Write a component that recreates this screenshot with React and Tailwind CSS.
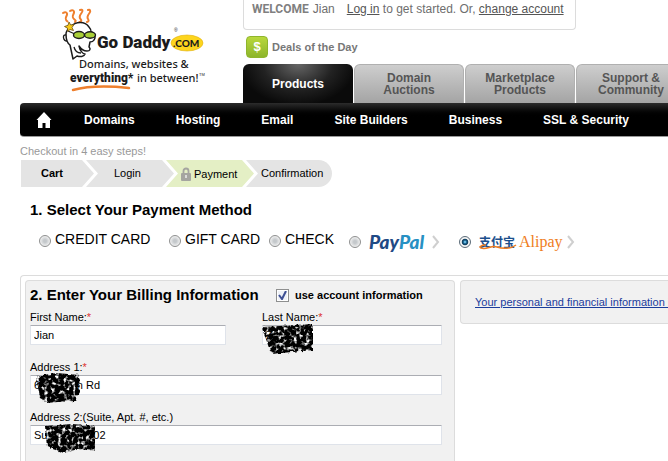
const tabs = ["Domain Auctions", "Marketplace Products", "Support & Community"];
const menu = ["Domains", "Hosting", "Email", "Site Builders", "Business", "SSL & Security"];

const inputClass =
  "block w-full h-5 px-[3px] text-[11px] leading-4 text-black bg-white border border-[#dfe3ea] border-t-[#abadb3] rounded-[1px]";

function Logo() {
  return (
    <svg width="146" height="90" viewBox="0 0 146 90" role="img" aria-label="Go Daddy">
      {/* hair */}
      <g fill="none" stroke="#ee7f2d" strokeWidth="2" strokeLinecap="round">
        <path d="M1 6c3-2 5 0 3.500 3s-1 4 1 5.500" />
        <path d="M8 4c3-2 5 0 3.500 3s-1 4 1 5.500s1 1.500.5 2.500" />
        <path d="M18 3c3-1 3 1 1.500 3s-3 4-1 6s0 2.500-1 3" />
        <path d="M26 3c2-1 3 1 1.500 3s-3 4-1.500 6s0 2.500-1 3" />
      </g>
      {/* head */}
      <path
        d="M8 20c6-6 15-6 19 0c1 1 2 3 2 5c4 1 5 5 3 8c-1 2-3 2-4 2l-1 5c2 2 1 4-2 4c-4 0-6-2-8-5c1 5 4 8 6 8c-1 3-5 3-8 2l-4 3l-3-14c-3-2-4-7-4-11c0-3 2-5 4-7z"
        fill="#fff"
        stroke="#1b1b1b"
        strokeWidth="1.500"
        strokeLinejoin="round"
      />
      <path d="M4 28c-4-1-3 6 1 6M12 40c1 4 4 6 7 6M6 24l7 3" fill="none" stroke="#1b1b1b" strokeWidth="1.300" />
      <ellipse cx="17" cy="28" rx="5.500" ry="3.500" fill="#a9cf38" stroke="#1b1b1b" strokeWidth="1.400" />
      <ellipse cx="28" cy="28" rx="5.500" ry="3.200" fill="#a9cf38" stroke="#1b1b1b" strokeWidth="1.400" />
      <path d="M7 15l1.700 3 3.300-.5-2 3 1.500 3-3.500-1-2.200 2-.3-3.300-3-1.700 3.500-1.200z" fill="#f7c917" stroke="#6b4e10" strokeWidth=".8" />

      <text x="35" y="41" fontFamily="Roboto, sans-serif" fontSize="17" fontWeight="900" fill="#1b1b1b">Go Daddy</text>
      <text x="112" y="25" fontFamily="'Liberation Sans', sans-serif" fontSize="5" fill="#1b1b1b">®</text>
      <ellipse cx="125" cy="36" rx="16" ry="8" fill="#fdd51d" stroke="#e0b010" strokeWidth=".6" />
      <text x="111" y="40" fontFamily="Lato, sans-serif" fontSize="10" fontWeight="900" fill="#1b1b1b">.COM</text>

      <text x="17" y="61" fontFamily="'Noto Sans', sans-serif" fontSize="11" fontWeight="500" fill="#1b1b1b">Domains, websites &amp;</text>
      <text x="8" y="75" fontFamily="Roboto, sans-serif" fontSize="12" fontWeight="900" fill="#1b1b1b">everything*</text>
      <text x="75" y="75" fontFamily="'Noto Sans', sans-serif" fontSize="11" fontWeight="500" fill="#1b1b1b">in between!</text>
      <text x="137" y="69" fontFamily="'Liberation Sans', sans-serif" fontSize="4" fill="#1b1b1b">TM</text>
      <path d="M11 83c15-4 37-4 56-2" fill="none" stroke="#ee7f2d" strokeWidth="2.500" strokeLinecap="round" />
    </svg>
  );
}

function Scribble({ id, d, className }) {
  return (
    <svg className={className} width="56" height="34" viewBox="0 0 56 34" aria-hidden="true">
      <filter id={id} x="0" y="0" width="100%" height="100%">
        <feTurbulence type="fractalNoise" baseFrequency="0.25" numOctaves="3" seed={id.length} result="noise" />
        <feColorMatrix in="noise" type="matrix" values="0 0 0 0 0  0 0 0 0 0  0 0 0 0 0  0 4 0 0 -1" result="grain" />
        <feDisplacementMap in="SourceGraphic" in2="noise" scale="4" xChannelSelector="R" yChannelSelector="B" result="rough" />
        <feComposite in="rough" in2="grain" operator="in" result="ink" />
        <feGaussianBlur in="ink" stdDeviation="0.6" />
      </filter>
      <path d={d} filter={`url(#${id})`} />
    </svg>
  );
}

function Chevron() {
  return (
    <svg width="8" height="14" viewBox="0 0 8 14" fill="none" stroke="#cfcfcf" strokeWidth="2" aria-hidden="true">
      <path d="M1 1l5 6-5 6" />
    </svg>
  );
}

function Radio({ id, checked }) {
  return (
    <input
      id={id}
      type="radio"
      name="payment"
      defaultChecked={checked}
      className="appearance-none w-3 h-3 shrink-0 rounded-full border border-[#8e8f8f] bg-[radial-gradient(circle,#c4c8cb_20%,#f4f4f4_75%)] checked:border-[#5b6b78] checked:bg-[radial-gradient(circle,#6fc3ea_8%,#155a86_25%,#0d3c5c_40%,#f4f4f4_52%)]"
    />
  );
}

function TextRadio({ id, label, className }) {
  return (
    <div className={className}>
      <span className="pt-1 flex">
        <Radio id={id} />
      </span>
      <label htmlFor={id} className="text-sm leading-4">{label}</label>
    </div>
  );
}

function Field({ id, label, required, value, className, children }) {
  return (
    <div className={className}>
      <label htmlFor={id} className="block text-[11px] leading-4 whitespace-nowrap">
        {label}
        {required && <span className="text-[#d33]">*</span>}
      </label>
      <input id={id} type="text" defaultValue={value} className={inputClass} />
      {children}
    </div>
  );
}

function Header() {
  return (
    <header>
      <div className="flex pl-5">
        <a href="#" className="w-[223px] shrink-0 pl-[42px] pt-[7px]">
          <Logo />
        </a>
        <div className="flex-1 min-w-0">
          <div className="w-[333px] h-[30px] pl-2 flex items-start border border-t-0 border-[#dcdcdc] rounded-b-[4px] text-xs leading-[18px] text-[#6e6e6e] whitespace-nowrap">
            <span className="font-[Roboto,sans-serif] font-bold text-[#808080]">WELCOME</span>
            <span className="pl-1">Jian</span>
            <p className="pl-3">
              <a href="#" className="underline text-[#555]">Log in</a> to get started. Or,{" "}
              <a href="#" className="underline text-[#555]">change account</a>
            </p>
          </div>
          <a href="#" className="flex items-center gap-1 pl-[3px] pt-[6px] pb-[6px] text-[11px] font-bold text-[#777]">
            <span className="w-[22px] h-[22px] flex items-center justify-center rounded-[4px] border border-[#8fb52c] bg-linear-to-b from-[#b9d83c] to-[#8db52b] text-white text-[13px]">
              $
            </span>
            Deals of the Day
          </a>
          <div className="flex gap-px text-xs leading-3 font-bold text-center">
            <a href="#" className="w-[110px] h-[39px] shrink-0 flex items-center justify-center rounded-t-[6px] text-white bg-[radial-gradient(ellipse_at_top,#666_0%,#222_45%,#0a0a0a_75%)]">
              Products
            </a>
            {tabs.map((tab) => (
              <a
                key={tab}
                href="#"
                className="w-[110px] h-[39px] px-4 shrink-0 flex items-center justify-center rounded-t-[6px] text-[#555] border border-b-0 border-[#b0b0b0] bg-linear-to-b from-[#cecece] to-[#a4a4a4]"
              >
                {tab}
              </a>
            ))}
          </div>
        </div>
      </div>
      <nav className="ml-5 h-[34px] pl-4 flex items-center rounded-l-[4px] border-b border-[#999] bg-linear-to-b from-[#2c2c2c] to-black to-45% text-white text-xs font-bold whitespace-nowrap">
        <a href="#" aria-label="Home" className="w-12 shrink-0">
          <svg width="16" height="16" viewBox="0 0 16 16" fill="currentColor">
            <path d="M8 0l7.500 8H14v8H9.500v-5h-3v5H2V8H.5z" />
          </svg>
        </a>
        <div className="flex gap-[41px]">
          {menu.map((item) => (
            <a key={item} href="#">{item}</a>
          ))}
        </div>
      </nav>
    </header>
  );
}

function Steps() {
  return (
    <div className="pl-5 pt-[6px] text-[11px] leading-4">
      <p className="text-[#999]">Checkout in 4 easy steps!</p>
      <ol className="flex h-[27px] mt-px pl-px leading-[26px]">
        <li className="w-[73px] pl-5 font-bold bg-[#e4e4e4] [clip-path:polygon(0_0,61px_0,100%_50%,61px_100%,0_100%)]">Cart</li>
        <li className="w-[88px] -ml-2 pl-7 bg-[#e4e4e4] [clip-path:polygon(0_0,76px_0,100%_50%,76px_100%,0_100%,12px_50%)]">Login</li>
        <li className="w-[88px] -ml-2 pl-[15px] flex items-center gap-[3px] bg-[#e4efc5] [clip-path:polygon(0_0,76px_0,100%_50%,76px_100%,0_100%,12px_50%)]">
          <svg width="10" height="14" viewBox="0 0 10 14" aria-hidden="true">
            <path d="M2.500 7V4a2.500 2.500 0 0 1 5 0v3" fill="none" stroke="#a5a5a0" strokeWidth="1.800" />
            <rect y="6" width="10" height="8" rx="1" fill="#a5a5a0" />
            <path d="M5 8v3" stroke="#eee" strokeWidth="1.500" />
          </svg>
          Payment
        </li>
        <li className="w-[86px] -ml-2 pl-[15px] rounded-r-full bg-[#e4e4e4] [clip-path:polygon(0_0,100%_0,100%_100%,0_100%,12px_50%)]">Confirmation</li>
      </ol>
    </div>
  );
}

function PaymentMethod() {
  return (
    <section className="pl-[30px] pt-[14px]">
      <h2 className="text-[15px] leading-[18px] font-bold">1. Select Your Payment Method</h2>
      <div className="flex items-start h-10 mt-3 pl-[9px] whitespace-nowrap">
        <TextRadio id="credit" label="CREDIT CARD" className="flex gap-1 w-[130px]" />
        <TextRadio id="gift" label="GIFT CARD" className="flex gap-1 w-[100px]" />
        <TextRadio id="check" label="CHECK" className="flex gap-1 w-20" />
        <div className="flex items-center gap-2 w-[110px] h-[22px]">
          <Radio id="paypal" />
          <label htmlFor="paypal" className="flex items-center gap-2">
            <span className="font-[Lato,sans-serif] text-[19px] leading-5 font-black italic text-[#1f4a85]">
              Pay<span className="text-[#2790c3]">Pal</span>
            </span>
            <Chevron />
          </label>
        </div>
        <div className="flex items-center gap-2 h-[22px]">
          <Radio id="alipay" checked />
          <label htmlFor="alipay" className="flex items-center gap-1">
            <span className="relative font-['Noto_Sans_CJK_SC',sans-serif] text-[12px] leading-5 font-bold text-[#1c4f8c]">
              支付宝
              <svg className="absolute left-0 top-3" width="38" height="6" viewBox="0 0 38 6" fill="none" stroke="#ef7d22" strokeWidth="1.500" aria-hidden="true">
                <path d="M7 1C2 1 0 3 2 4c6 2 10-3 16-1s14 2 19-2" />
              </svg>
            </span>
            <span className="font-['Liberation_Serif',serif] text-base leading-5 text-[#ef7d22]">Alipay</span>
            <Chevron />
          </label>
        </div>
      </div>
    </section>
  );
}

function Billing() {
  return (
    <section className="flex-1 flex ml-5 mt-1 pl-1 pt-1 gap-[5px] border-t border-l border-[#dcdcdc] rounded-tl-[4px]">
      <form className="w-[430px] shrink-0 pl-1 pr-3 pt-[5px] pb-4 bg-[#f1f1f1] border border-b-0 border-[#dcdcdc] rounded-t-[4px]">
        <div className="flex items-center h-[18px]">
          <h2 className="w-[246px] text-[15px] leading-[18px] font-bold whitespace-nowrap">2. Enter Your Billing Information</h2>
          <input
            id="account"
            type="checkbox"
            defaultChecked
            className="appearance-none w-[13px] h-[13px] border border-[#8e8f8f] bg-[#eef1f7] outline-1 -outline-offset-2 outline-white checked:bg-[url('data:image/svg+xml;utf8,<svg%20xmlns=%22http://www.w3.org/2000/svg%22%20viewBox=%220%200%2011%2011%22><path%20d=%22M2%205l3%204%204-8%22%20fill=%22none%22%20stroke=%22%233d4f94%22%20stroke-width=%222%22/></svg>')]"
          />
          <label htmlFor="account" className="pl-[6px] text-[11px] font-bold">use account information</label>
        </div>
        <div className="flex justify-between pt-[5px]">
          <Field id="first" label="First Name:" required value="Jian" className="w-[196px]" />
          <Field id="last" label="Last Name:" required value="Z" className="relative w-[180px]">
            <Scribble id="mark" d="M0 4L51 1V27L9 31z" className="absolute left-0 top-[14px]" />
          </Field>
        </div>
        <div className="flex flex-col gap-[14px] pt-[14px]">
          <Field id="address1" label="Address 1:" required value="6            n Rd" className="relative">
            <Scribble id="marks" d="M4 5L25 2L47 4L48 21L43 30L26 31L14 32L8 27z" className="absolute left-[2px] top-3" />
          </Field>
          <Field id="address2" label="Address 2:(Suite, Apt. #, etc.)" value="Su               02" className="relative">
            <Scribble id="markers" d="M3 5L30 3L53 5V30L36 28L22 32L5 26z" className="absolute left-3 top-3" />
          </Field>
        </div>
      </form>
      <aside className="flex-1 min-w-0 h-11 pl-[14px] flex items-center overflow-hidden bg-[#f1f1f1] border border-r-0 border-[#dcdcdc] rounded-l-[4px]">
        <a href="#" className="text-[11px] text-[#1a3c9c] underline whitespace-nowrap">Your personal and financial information is secure</a>
      </aside>
    </section>
  );
}

function App() {
  return (
    <div className="min-h-screen flex flex-col overflow-x-hidden bg-white text-black font-['Liberation_Sans',Arial,sans-serif]">
      <Header />
      <Steps />
      <PaymentMethod />
      <Billing />
    </div>
  );
}

export default App;
